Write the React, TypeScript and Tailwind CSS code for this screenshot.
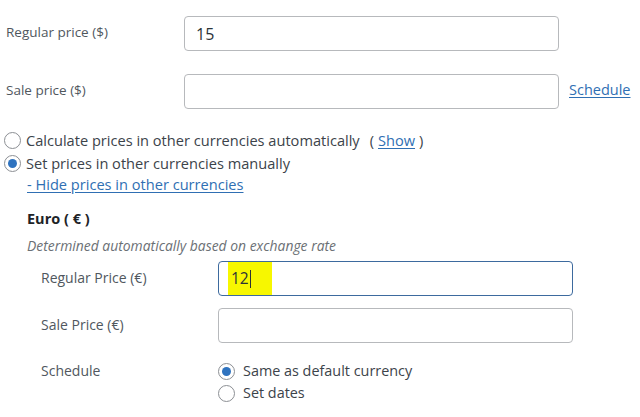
import React from "react";

const font = { fontFamily: '"Open Sans", "Noto Sans", sans-serif' };

function Radio({ checked }: { checked?: boolean }) {
  return (
    <span className="flex h-[17px] w-[17px] shrink-0 items-center justify-center rounded-full border border-[#8c8f94] bg-white">
      {checked && <span className="h-[9px] w-[9px] rounded-full bg-[#2f73bf]" />}
    </span>
  );
}

export default function App() {
  return (
    <div className="h-[417px] w-[640px] overflow-hidden bg-white text-[#3c434a]" style={font}>
      <div className="pt-[16px]">
        <div className="flex items-center">
          <div className="w-[184px] pb-[3px] pl-[6px] text-[13.5px] text-[#50575e]">Regular price ($)</div>
          <div className="flex h-[35px] w-[375px] items-center rounded-[4px] border border-[#b7b9bc] px-[11px] text-[16px] text-[#2c3338]">
            15
          </div>
        </div>
        <div className="mt-[23px] flex items-center">
          <div className="w-[184px] pb-[3px] pl-[6px] text-[13.5px] text-[#50575e]">Sale price ($)</div>
          <div className="h-[35px] w-[375px] rounded-[4px] border border-[#b7b9bc]" />
          <a className="ml-[10px] pb-[3px] text-[14.5px] text-[#2f6fb3] underline underline-offset-2">Schedule</a>
        </div>

        <div className="mt-[20px] flex h-[23px] items-center pl-[4px] text-[14.6px]">
          <Radio />
          <span className="ml-[5px]">Calculate prices in other currencies automatically</span>
          <span className="ml-[10px]">(</span>
          <a className="mx-[4px] text-[#2f6fb3] underline underline-offset-2">Show</a>
          <span>)</span>
        </div>
        <div className="flex h-[23px] items-center pl-[4px] text-[14.6px]">
          <Radio checked />
          <span className="ml-[5px]">Set prices in other currencies manually</span>
        </div>
        <div className="flex h-[20px] items-center pl-[27px] text-[14.6px]">
          <a className="text-[#2f6fb3] underline underline-offset-2">- Hide prices in other currencies</a>
        </div>

        <div className="mt-[14px] flex h-[20px] items-center pl-[27px] text-[14.5px] font-bold text-[#1d2327]">
          Euro ( € )
        </div>
        <div className="mt-[7px] flex h-[20px] items-center pl-[27px] text-[13.9px] italic text-[#6b7075]">
          Determined automatically based on exchange rate
        </div>

        <div className="mt-[5px] flex items-center">
          <div className="w-[218px] pb-[2px] pl-[41px] text-[14px] text-[#50575e]">Regular Price (€)</div>
          <div className="flex h-[35px] w-[355px] items-center rounded-[4px] border-[1.5px] border-[#3d6a9e] pl-[9px] text-[15.5px] text-[#2c3338]">
            <span className="flex h-[33px] w-[44px] items-center bg-[#f7f700] pl-[3px]">
              12<span className="ml-[1px] h-[18px] w-px bg-[#2c3338]" />
            </span>
          </div>
        </div>
        <div className="mt-[12px] flex items-center">
          <div className="w-[218px] pb-[2px] pl-[41px] text-[14px] text-[#50575e]">Sale Price (€)</div>
          <div className="h-[35px] w-[355px] rounded-[4px] border border-[#b7b9bc]" />
        </div>

        <div className="mt-[17px] flex">
          <div className="w-[218px] pl-[41px] text-[14px] text-[#50575e]">Schedule</div>
          <div className="text-[14.4px]">
            <div className="flex h-[22px] items-center">
              <Radio checked />
              <span className="ml-[8px]">Same as default currency</span>
            </div>
            <div className="flex h-[22px] items-center">
              <Radio />
              <span className="ml-[8px]">Set dates</span>
            </div>
          </div>
        </div>
      </div>
    </div>
  );
}
